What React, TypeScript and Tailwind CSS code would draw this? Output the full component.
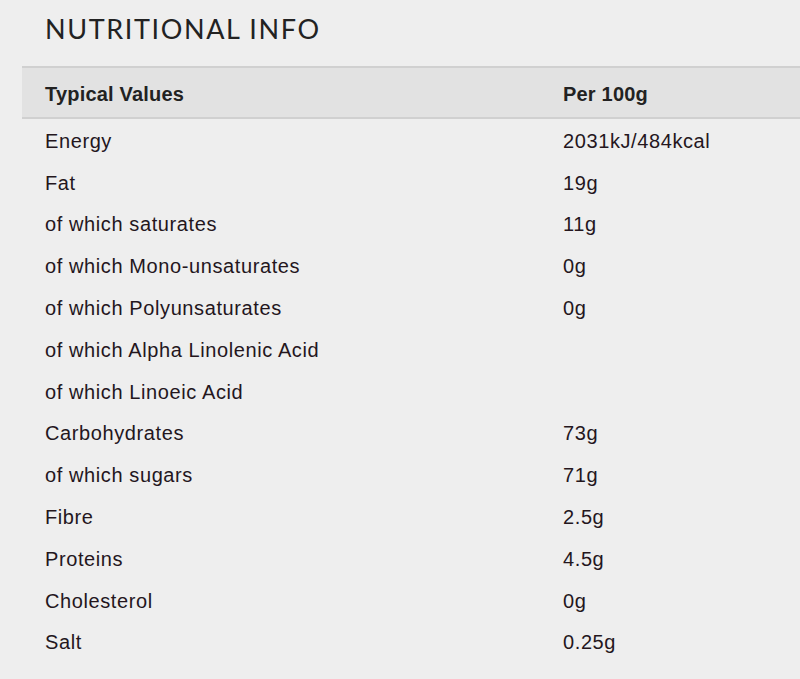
const rows: [string, string][] = [
  ["Energy", "2031kJ/484kcal"],
  ["Fat", "19g"],
  ["of which saturates", "11g"],
  ["of which Mono-unsaturates", "0g"],
  ["of which Polyunsaturates", "0g"],
  ["of which Alpha Linolenic Acid", ""],
  ["of which Linoeic Acid", ""],
  ["Carbohydrates", "73g"],
  ["of which sugars", "71g"],
  ["Fibre", "2.5g"],
  ["Proteins", "4.5g"],
  ["Cholesterol", "0g"],
  ["Salt", "0.25g"],
];

export default function App() {
  return (
    <div className="w-[800px] h-[679px] bg-[#eeeeee] overflow-hidden">
      <h2 className="pl-[45px] pt-[13px] h-[66px] font-['Lato','Open_Sans',sans-serif] text-[27px] leading-[32px] tracking-[0.06em] text-[#222]">
        NUTRITIONAL INFO
      </h2>

      {/* table */}
      <div className="ml-[22px] font-['Liberation_Sans',Arial,sans-serif] text-[20px]">
        <div className="flex items-center h-[53px] pt-[2px] bg-[#e2e2e2] border-y-2 border-[#d0d0d0] font-bold tracking-[0.2px] text-[#222]">
          <div className="w-[541px] pl-[23px]">Typical Values</div>
          <div>Per 100g</div>
        </div>
        <div className="pt-[1px] tracking-[0.6px]">
          {rows.map(([name, value]) => (
            <div key={name} className="flex items-center h-[41.8px] text-[#24161d]">
              <div className="w-[541px] pl-[23px]">{name}</div>
              <div>{value}</div>
            </div>
          ))}
        </div>
      </div>
    </div>
  );
}
